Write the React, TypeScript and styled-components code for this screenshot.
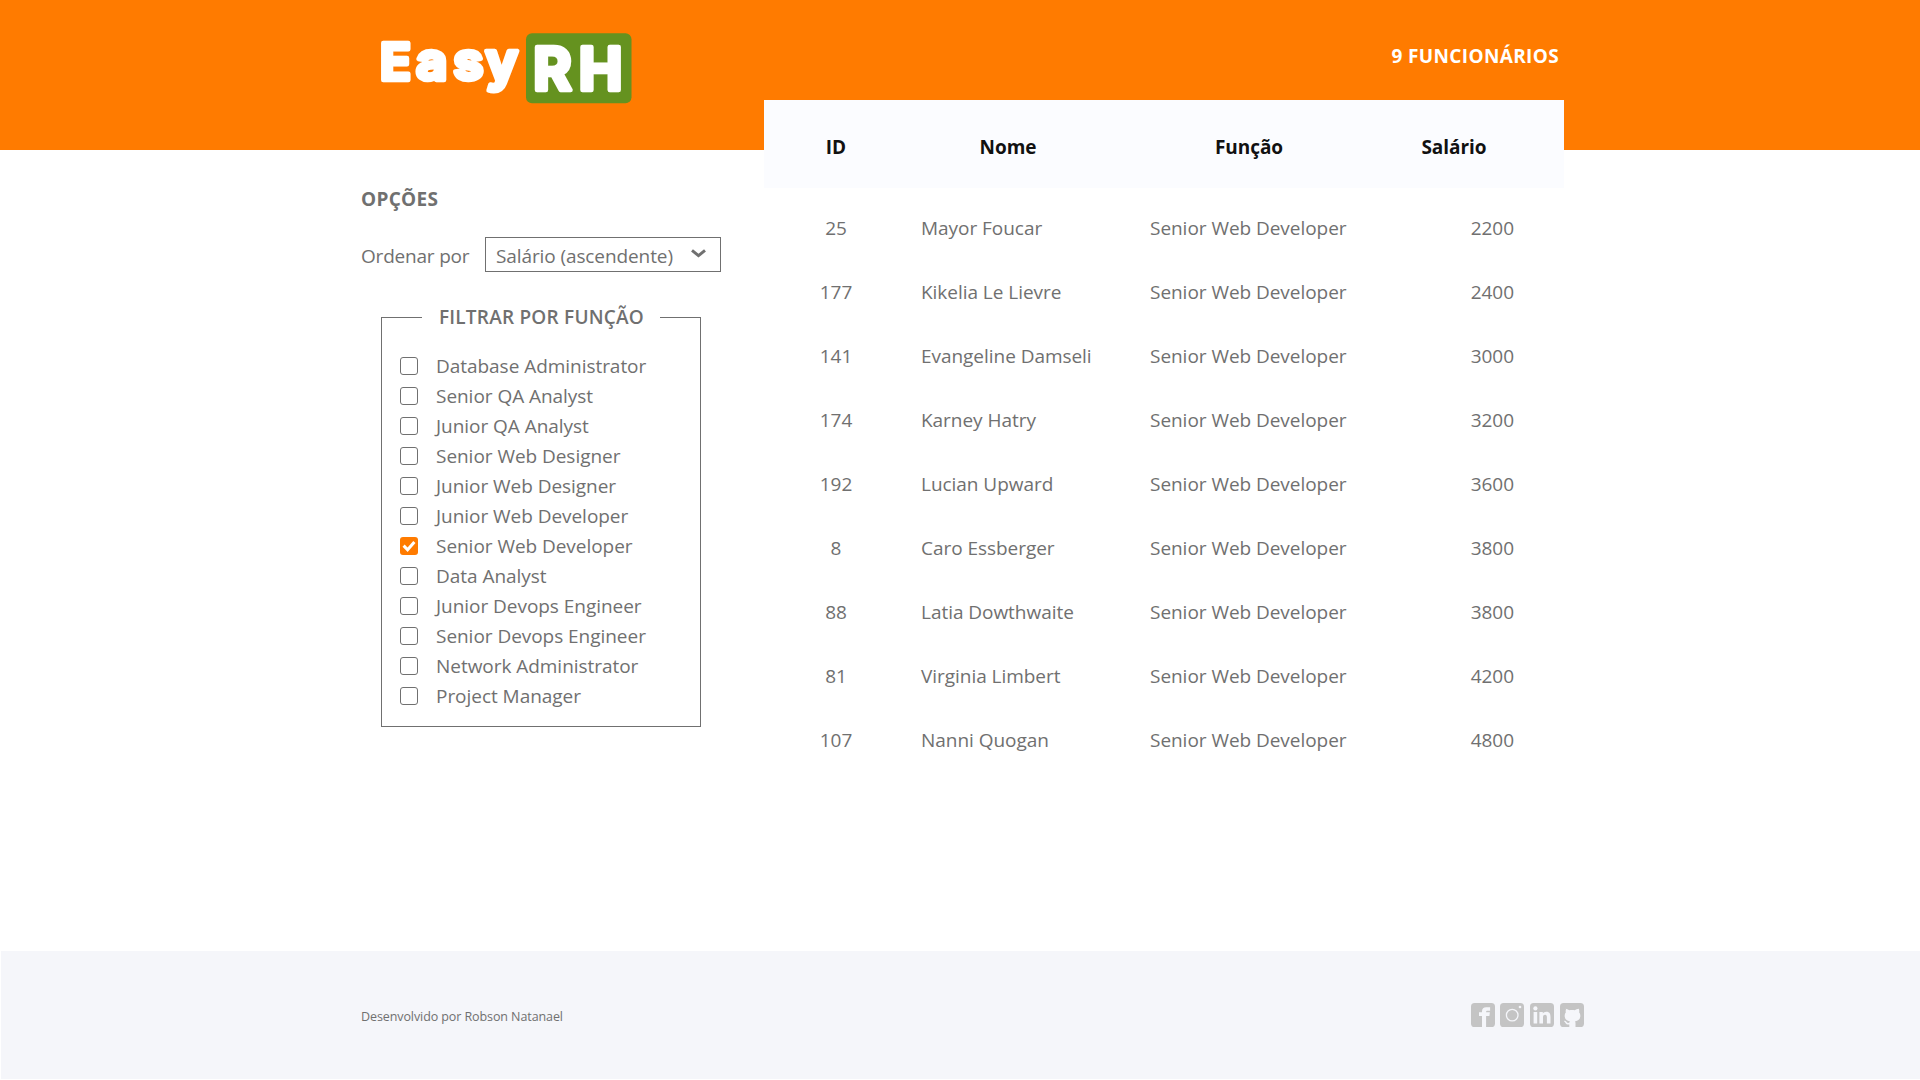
import React, { useState } from "react";
import styled, { createGlobalStyle } from "styled-components";

const GlobalStyle = createGlobalStyle`
  * { box-sizing: border-box; }
  body {
    margin: 0;
    background: #fff;
    color: #707070;
    font-family: "Segoe UI", "Open Sans", "Noto Sans", sans-serif;
    font-size: 19px;
    line-height: 30px;
    letter-spacing: -0.04px;
  }
`;

const Page = styled.div`
  display: flex;
  flex-direction: column;
  min-height: 1080px;
`;

const Header = styled.header`
  display: flex;
  justify-content: space-between;
  align-items: flex-start;
  height: 150px;
  padding: 33px 361px 0 381px;
  background: #ff7b00;
`;

const Logo = styled.svg`
  display: block;
  width: 252px;
  height: 72px;
  overflow: visible;
  font-family: "Inter", sans-serif;
  font-weight: 700;
  letter-spacing: 0;
  fill: #fff;
  stroke: #fff;
  stroke-linejoin: round;
`;

const Counter = styled.strong`
  margin-top: 8px;
  color: #fff;
  font-weight: 700;
  letter-spacing: 0.35px;
`;

const Main = styled.main`
  display: flex;
  align-items: flex-start;
  gap: 43px;
  flex: 1;
  padding: 0 356px 0 360px;
`;

const Sidebar = styled.aside`
  width: 361px;
  padding-top: 34px;
`;

const Title = styled.h2`
  margin: 0 0 23px;
  padding-left: 1px;
  font-size: inherit;
  font-weight: 700;
  line-height: 30px;
  letter-spacing: 0.3px;
`;

const SortRow = styled.div`
  display: flex;
  align-items: center;
  justify-content: space-between;
  height: 35px;
  padding-left: 1px;
`;

const SortLabel = styled.span`
  padding-top: 3px;
  letter-spacing: -0.2px;
`;

const Select = styled.button`
  display: flex;
  align-items: center;
  justify-content: space-between;
  width: 236px;
  height: 35px;
  padding: 3px 14px 0 10px;
  border: 1px solid #707070;
  background: #fff;
  color: inherit;
  font: inherit;
  letter-spacing: -0.1px;

  svg {
    width: 15px;
    height: 9px;
    margin-bottom: 5px;
  }
`;

const Filter = styled.fieldset`
  display: flex;
  flex-direction: column;
  width: 320px;
  margin: 30px 0 0 21px;
  padding: 18px 18px 15px;
  border: 1px solid #707070;
`;

const Legend = styled.legend`
  width: 238px;
  height: 31px;
  margin: 0 auto;
  padding: 0 0 0 1px;
  text-align: center;
  font-weight: 600;
  letter-spacing: 0.22px;
`;

const Option = styled.label`
  display: flex;
  align-items: center;
  gap: 18px;
  height: 30px;
  white-space: nowrap;
`;

const Checkbox = styled.input`
  position: absolute;
  opacity: 0;
`;

const Box = styled.span<{ $checked: boolean }>`
  display: grid;
  place-items: center;
  flex: none;
  width: 18px;
  height: 18px;
  border: ${(p) => (p.$checked ? "0" : "1px solid #707070")};
  border-radius: 3px;
  background: ${(p) => (p.$checked ? "#ff7b00" : "transparent")};
`;

const Table = styled.section`
  width: 800px;
  margin-top: -50px;
`;

const Row = styled.div<{ $head?: boolean }>`
  display: grid;
  grid-template-columns: 44px 63px 174px 55px 198px 46px 120px;
  align-items: center;
  height: ${(p) => (p.$head ? "88px" : "64px")};
  margin-bottom: ${(p) => (p.$head ? "8px" : "0")};
  padding: ${(p) => (p.$head ? "5px 0 0 50px" : "0 0 0 50px")};
  background: ${(p) => (p.$head ? "#fbfcff" : "transparent")};
  color: ${(p) => (p.$head ? "#111" : "inherit")};
  font-weight: ${(p) => (p.$head ? 700 : 400)};

  > :nth-child(2) { grid-column: 3; }
  > :nth-child(3) { grid-column: 5; }
  > :nth-child(4) { grid-column: 7; }
`;

const Cell = styled.span<{ $align?: "left" | "center" | "right" }>`
  text-align: ${(p) => p.$align ?? "left"};
  white-space: nowrap;
`;

const Footer = styled.footer`
  display: flex;
  align-items: center;
  justify-content: space-between;
  height: 128px;
  margin: 0 0 1px 1px;
  padding: 0 336.5px 0 360px;
  background: #f5f6fa;
`;

const Credit = styled.span`
  padding-top: 4px;
  font-size: 12.5px;
  letter-spacing: -0.09px;
`;

const Socials = styled.nav`
  display: flex;
  gap: 5.6px;
  svg { display: block; width: 24px; height: 24px; }
`;

const roles = [
  "Database Administrator",
  "Senior QA Analyst",
  "Junior QA Analyst",
  "Senior Web Designer",
  "Junior Web Designer",
  "Junior Web Developer",
  "Senior Web Developer",
  "Data Analyst",
  "Junior Devops Engineer",
  "Senior Devops Engineer",
  "Network Administrator",
  "Project Manager",
];

const employees: [number, string, string, number][] = [
  [25, "Mayor Foucar", "Senior Web Developer", 2200],
  [177, "Kikelia Le Lievre", "Senior Web Developer", 2400],
  [141, "Evangeline Damseli", "Senior Web Developer", 3000],
  [174, "Karney Hatry", "Senior Web Developer", 3200],
  [192, "Lucian Upward", "Senior Web Developer", 3600],
  [8, "Caro Essberger", "Senior Web Developer", 3800],
  [88, "Latia Dowthwaite", "Senior Web Developer", 3800],
  [81, "Virginia Limbert", "Senior Web Developer", 4200],
  [107, "Nanni Quogan", "Senior Web Developer", 4800],
];

const Tile = ({ children }: { children: React.ReactNode }) => (
  <svg viewBox="0 0 24 24">
    <rect width="24" height="24" rx="3.6" fill="#c4c4c4" />
    {children}
  </svg>
);

export default function App() {
  const [selected, setSelected] = useState<string[]>(["Senior Web Developer"]);
  const toggle = (role: string) =>
    setSelected((s) => (s.includes(role) ? s.filter((r) => r !== role) : [...s, role]));

  return (
    <Page>
      <GlobalStyle />
      <Header>
        <Logo viewBox="0 0 252 72">
          <rect x="145" y="0.3" width="105.5" height="70" rx="6" fill="#65921f" stroke="none" />
          <text y="47.4" strokeWidth="4.6">
            <tspan x="-1" fontSize="51">E</tspan>
            <tspan x="35 72.3 104.5" fontSize="54">asy</tspan>
          </text>
          <text x="152.3 197.8" y="56.6" fontSize="58.5" strokeWidth="4.6">
            RH
          </text>
        </Logo>
        <Counter>9 FUNCIONÁRIOS</Counter>
      </Header>

      <Main>
        <Sidebar>
          <Title>OPÇÕES</Title>
          <SortRow>
            <SortLabel>Ordenar por</SortLabel>
            <Select type="button">
              Salário (ascendente)
              <svg viewBox="0 0 15 9" fill="none" stroke="#707070" strokeWidth="3">
                <path d="M1 1.4 L7.5 6.6 L14 1.4" />
              </svg>
            </Select>
          </SortRow>
          <Filter>
            <Legend>FILTRAR POR FUNÇÃO</Legend>
            {roles.map((role) => (
              <Option key={role}>
                <Checkbox
                  type="checkbox"
                  checked={selected.includes(role)}
                  onChange={() => toggle(role)}
                />
                <Box $checked={selected.includes(role)}>
                  {selected.includes(role) && (
                    <svg width="14" height="14" viewBox="0 0 14 14" fill="none" stroke="#fff" strokeWidth="3">
                      <path d="M1.6 6.6 L5.6 10.8 L12.4 3" />
                    </svg>
                  )}
                </Box>
                {role}
              </Option>
            ))}
          </Filter>
        </Sidebar>

        <Table>
          <Row $head>
            <Cell $align="center">ID</Cell>
            <Cell $align="center">Nome</Cell>
            <Cell $align="center">Função</Cell>
            <Cell $align="center">Salário</Cell>
          </Row>
          {employees.map(([id, name, role, salary]) => (
            <Row key={id}>
              <Cell $align="center">{id}</Cell>
              <Cell>{name}</Cell>
              <Cell>{role}</Cell>
              <Cell $align="right">{salary}</Cell>
            </Row>
          ))}
        </Table>
      </Main>

      <Footer>
        <Credit>Desenvolvido por Robson Natanael</Credit>
        <Socials>
          <Tile>
            <path
              fill="#f5f6fa"
              d="M11 24V12.9H8V9.2h3V8.4c0-2.7 1.6-4.1 4.1-4.1h4v3.5h-2.4c-1.2 0-1.6.5-1.6 1.4h3.8l-.5 3.7h-3.3V24z"
            />
          </Tile>
          <Tile>
            <circle cx="12.2" cy="12.1" r="5.8" fill="none" stroke="#f5f6fa" strokeWidth="1.3" />
            <circle cx="20" cy="4" r="1.3" fill="#f5f6fa" />
          </Tile>
          <Tile>
            <g fill="#f5f6fa">
              <circle cx="5.4" cy="5.4" r="2.1" />
              <path d="M3.6 9h3.6v11.4H3.6zM9.4 9h3.4v1.6c.7-1.2 1.9-1.9 3.5-1.9 3.4 0 4.2 2.2 4.2 5.3v6.4h-3.6v-5.7c0-1.5-.2-2.9-1.8-2.9-1.7 0-2.1 1.3-2.1 2.9v5.7H9.4z" />
            </g>
          </Tile>
          <Tile>
            <path
              fill="#f5f6fa"
              d="M5.2 5.8c1.5 0 3 .8 4 1.5 1.8-.4 3.8-.4 5.6 0 1-.7 2.5-1.5 4-1.5.6 1.4.6 2.6.3 3.5 1 1.2 1.4 2.6 1.2 4.2-.3 3-2.2 4.3-5.2 4.7.3.6.4 1.3.4 2.3V24H9.3v-2.5c-2 .3-3-.3-3.8-1.6-.4-.8-.9-1.3-1.5-1.7.2-.7 1.5-.7 2.4.5.7 1.1 1.5 1.5 2.9 1.1.1-.7.2-1.2.6-1.6-3-.4-4.9-1.7-5.2-4.7-.2-1.6.2-3 1.2-4.2-.4-1-.3-2.1.3-3.5z"
            />
          </Tile>
        </Socials>
      </Footer>
    </Page>
  );
}
